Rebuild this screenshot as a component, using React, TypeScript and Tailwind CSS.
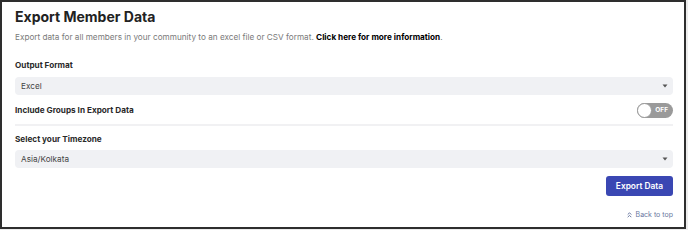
import React from "react";

function Caret() {
  return (
    <svg width="6" height="4" viewBox="0 0 6 4" className="shrink-0">
      <path d="M0.5 0.5 L5.5 0.5 L3 3.5 Z" fill="#555" />
    </svg>
  );
}

export default function App() {
  return (
    <div className="w-[688px] h-[230px] bg-[#ececec] font-['Inter',sans-serif]">
      <div className="w-[686px] h-[229px] border-2 border-[#2e2e2e] bg-white pl-[13px] pr-[11px] pt-[6px] flex flex-col">
        <h1 className="text-[14px] leading-[17px] font-bold text-[#222]">Export Member Data</h1>
        <p className="mt-[6px] text-[8.2px] leading-[12px] text-[#7a7a7a]">
          Export data for all members in your community to an excel file or CSV format.{" "}
          <span className="font-bold text-black">Click here for more information</span>.
        </p>
        <div className="mt-[16px] text-[8.2px] leading-[12px] font-bold text-[#2a2a2a]">Output Format</div>
        <div className="mt-[6px] h-[18px] rounded-[4px] bg-[#f0f1f4] flex items-center justify-between pl-[6px] pr-[5px]">
          <span className="text-[8.2px] text-[#444]">Excel</span>
          <Caret />
        </div>
        <div className="mt-[7px] h-[16px] flex items-center justify-between">
          <span className="text-[8.2px] leading-[12px] font-bold text-[#2a2a2a]">Include Groups In Export Data</span>
          <div className="w-[36px] h-[15px] rounded-full bg-[#9a9a9a] relative flex items-center justify-end pr-[5px]">
            <div className="absolute left-0 top-0 w-[15px] h-[15px] rounded-full bg-white border border-[#9a9a9a]" />
            <span className="text-[6.5px] font-bold text-white leading-none">OFF</span>
          </div>
        </div>
        <div className="mt-[6px] h-[2px] bg-[#f1f1f3]" />
        <div className="mt-[7px] text-[8.2px] leading-[12px] font-bold text-[#2a2a2a]">Select your Timezone</div>
        <div className="mt-[5px] h-[18px] rounded-[4px] bg-[#f0f1f4] flex items-center justify-between pl-[6px] pr-[5px]">
          <span className="text-[8.2px] text-[#444]">Asia/Kolkata</span>
          <Caret />
        </div>
        <div className="mt-[8px] flex justify-end">
          <button className="w-[67px] h-[20px] rounded-[3px] bg-[#3a47b3] text-white text-[8.4px] font-semibold">Export Data</button>
        </div>
        <div className="mt-[13px] h-[12px] flex justify-end items-center gap-[4px] text-[7px] text-[#6a78a0]">
          <svg width="5" height="6" viewBox="0 0 5 6">
            <path d="M0.7 2.6 L2.5 0.8 L4.3 2.6 M0.7 5.2 L2.5 3.4 L4.3 5.2" stroke="#6a78a0" strokeWidth="1" fill="none" />
          </svg>
          <span>Back to top</span>
        </div>
      </div>
    </div>
  );
}
